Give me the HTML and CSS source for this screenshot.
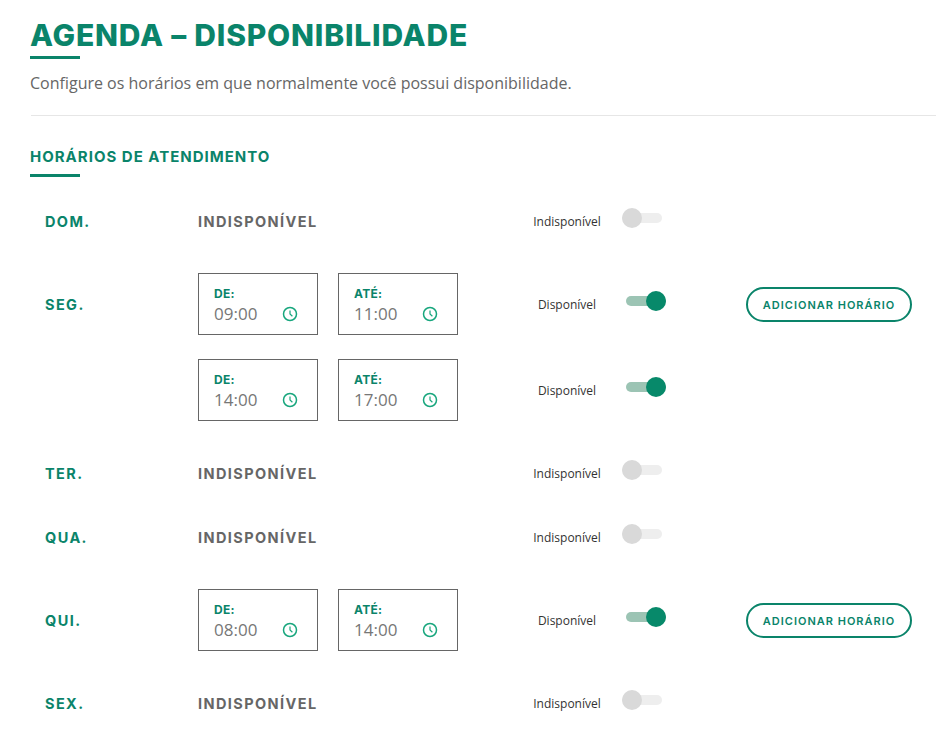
FILE: index.html
```html
<!DOCTYPE html>
<html lang="pt-BR">
<head>
    <meta charset="UTF-8">
    <title>Agenda - Disponibilidade</title>
    <link rel="stylesheet" href="styles.css">
</head>
<body>
    <svg class="icon-defs" width="0" height="0">
        <symbol id="clock" viewBox="0 0 16 16">
            <circle cx="8" cy="8" r="6.5" fill="none" stroke="currentColor" stroke-width="1.5"/>
            <path d="M8 4.5V8l2.4 2.2" fill="none" stroke="currentColor" stroke-width="1.2"/>
        </symbol>
    </svg>

    <header class="page-head">
        <h1>AGENDA – DISPONIBILIDADE</h1>
        <p>Configure os horários em que normalmente você possui disponibilidade.</p>
    </header>

    <section class="schedule">
        <h2>HORÁRIOS DE ATENDIMENTO</h2>

        <div class="row off">
            <span class="day">DOM.</span>
            <span class="none">INDISPONÍVEL</span>
            <span class="status">Indisponível</span>
            <span class="toggle"><i></i></span>
        </div>

        <div class="row on first">
            <span class="day">SEG.</span>
            <div class="slots">
                <div class="slot"><label>DE:</label><div class="time">09:00<svg><use href="#clock"/></svg></div></div>
                <div class="slot"><label>ATÉ:</label><div class="time">11:00<svg><use href="#clock"/></svg></div></div>
            </div>
            <span class="status">Disponível</span>
            <span class="toggle"><i></i></span>
            <button class="add">ADICIONAR HORÁRIO</button>
        </div>
        <div class="row on last">
            <span class="day"></span>
            <div class="slots">
                <div class="slot"><label>DE:</label><div class="time">14:00<svg><use href="#clock"/></svg></div></div>
                <div class="slot"><label>ATÉ:</label><div class="time">17:00<svg><use href="#clock"/></svg></div></div>
            </div>
            <span class="status">Disponível</span>
            <span class="toggle"><i></i></span>
        </div>

        <div class="row off">
            <span class="day">TER.</span>
            <span class="none">INDISPONÍVEL</span>
            <span class="status">Indisponível</span>
            <span class="toggle"><i></i></span>
        </div>

        <div class="row off">
            <span class="day">QUA.</span>
            <span class="none">INDISPONÍVEL</span>
            <span class="status">Indisponível</span>
            <span class="toggle"><i></i></span>
        </div>

        <div class="row on first last">
            <span class="day">QUI.</span>
            <div class="slots">
                <div class="slot"><label>DE:</label><div class="time">08:00<svg><use href="#clock"/></svg></div></div>
                <div class="slot"><label>ATÉ:</label><div class="time">14:00<svg><use href="#clock"/></svg></div></div>
            </div>
            <span class="status">Disponível</span>
            <span class="toggle"><i></i></span>
            <button class="add">ADICIONAR HORÁRIO</button>
        </div>

        <div class="row off">
            <span class="day">SEX.</span>
            <span class="none">INDISPONÍVEL</span>
            <span class="status">Indisponível</span>
            <span class="toggle"><i></i></span>
        </div>
    </section>
</body>
</html>
```

FILE: styles.css
```css
html, body {
    overflow: hidden;
    height: 100%;
}

body {
    margin: 0;
    background: #fff;
    font-family: 'Open Sans', sans-serif;
    color: #666;
}

.icon-defs {
    position: absolute;
}

.page-head {
    padding: 17px 0 0 30px;
}

h1 {
    margin: 0;
    font-family: 'Inter', sans-serif;
    font-size: 30px;
    line-height: 36px;
    font-weight: 800;
    letter-spacing: 0.8px;
    color: #0a846a;
}

h1::after, h2::after {
    content: '';
    display: block;
    width: 50px;
    height: 3px;
    background: #0a846a;
}

h1::after {
    margin-top: 3px;
}

.page-head p {
    margin: 13px 0 0;
    font-size: 16px;
    line-height: 22px;
    color: #666;
}

.schedule {
    margin: 21px 0 0 31px;
    padding-top: 32px;
    border-top: 1px solid #e6e6e6;
}

h2 {
    margin: 0 0 24px -1px;
    font-family: 'Inter', sans-serif;
    font-size: 15px;
    line-height: 18px;
    font-weight: 700;
    letter-spacing: 1px;
    color: #0a846a;
}

h2::after {
    margin-top: 8px;
}

.row {
    display: grid;
    grid-template-columns: 153px 260px 63px 92px 133px 166px;
    align-items: center;
    height: 40px;
    margin: 0 0 24px 14px;
}

.row.on {
    height: 62px;
}

.row.first {
    margin-top: 32px;
}

.row.last {
    margin-bottom: 32px;
}

.day, .none {
    font-family: 'Inter', sans-serif;
    font-size: 14.5px;
    font-weight: 700;
    letter-spacing: 1.4px;
    color: #0a846a;
}

.none {
    color: #666;
}

.slots {
    display: flex;
    gap: 20px;
}

.slot {
    box-sizing: border-box;
    width: 120px;
    height: 62px;
    padding: 13px 15px 0;
    border: 1px solid #666;
}

.slot label {
    display: block;
    font-family: 'Inter', sans-serif;
    font-size: 12px;
    line-height: 14px;
    font-weight: 700;
    letter-spacing: 0.3px;
    color: #0a846a;
}

.time {
    display: flex;
    align-items: center;
    justify-content: space-between;
    padding-right: 4px;
    font-size: 17px;
    line-height: 26px;
    color: #777;
}

.time svg {
    width: 16px;
    height: 16px;
    color: #17a67d;
}

.status {
    grid-column: 3 / 5;
    justify-self: end;
    width: 92px;
    text-align: center;
    font-size: 12px;
    color: #333;
}

.toggle {
    position: relative;
    display: block;
    width: 40px;
    height: 10px;
    margin: -6px 0 0 9px;
    border-radius: 5px;
    background: #eee;
}

.toggle i {
    position: absolute;
    top: -5px;
    left: 0;
    width: 20px;
    height: 20px;
    border-radius: 50%;
    background: #d9d9d9;
}

.on .toggle {
    margin-left: 13px;
    background: #9cc4b4;
}

.on .toggle i {
    left: 20px;
    background: #07896a;
}

.add {
    box-sizing: border-box;
    width: 166px;
    height: 35px;
    padding: 1px 0 0;
    border: 2px solid #0a846a;
    border-radius: 18px;
    background: #fff;
    font-family: 'Inter', sans-serif;
    font-size: 11px;
    font-weight: 600;
    letter-spacing: 1px;
    color: #0a846a;
}
```
